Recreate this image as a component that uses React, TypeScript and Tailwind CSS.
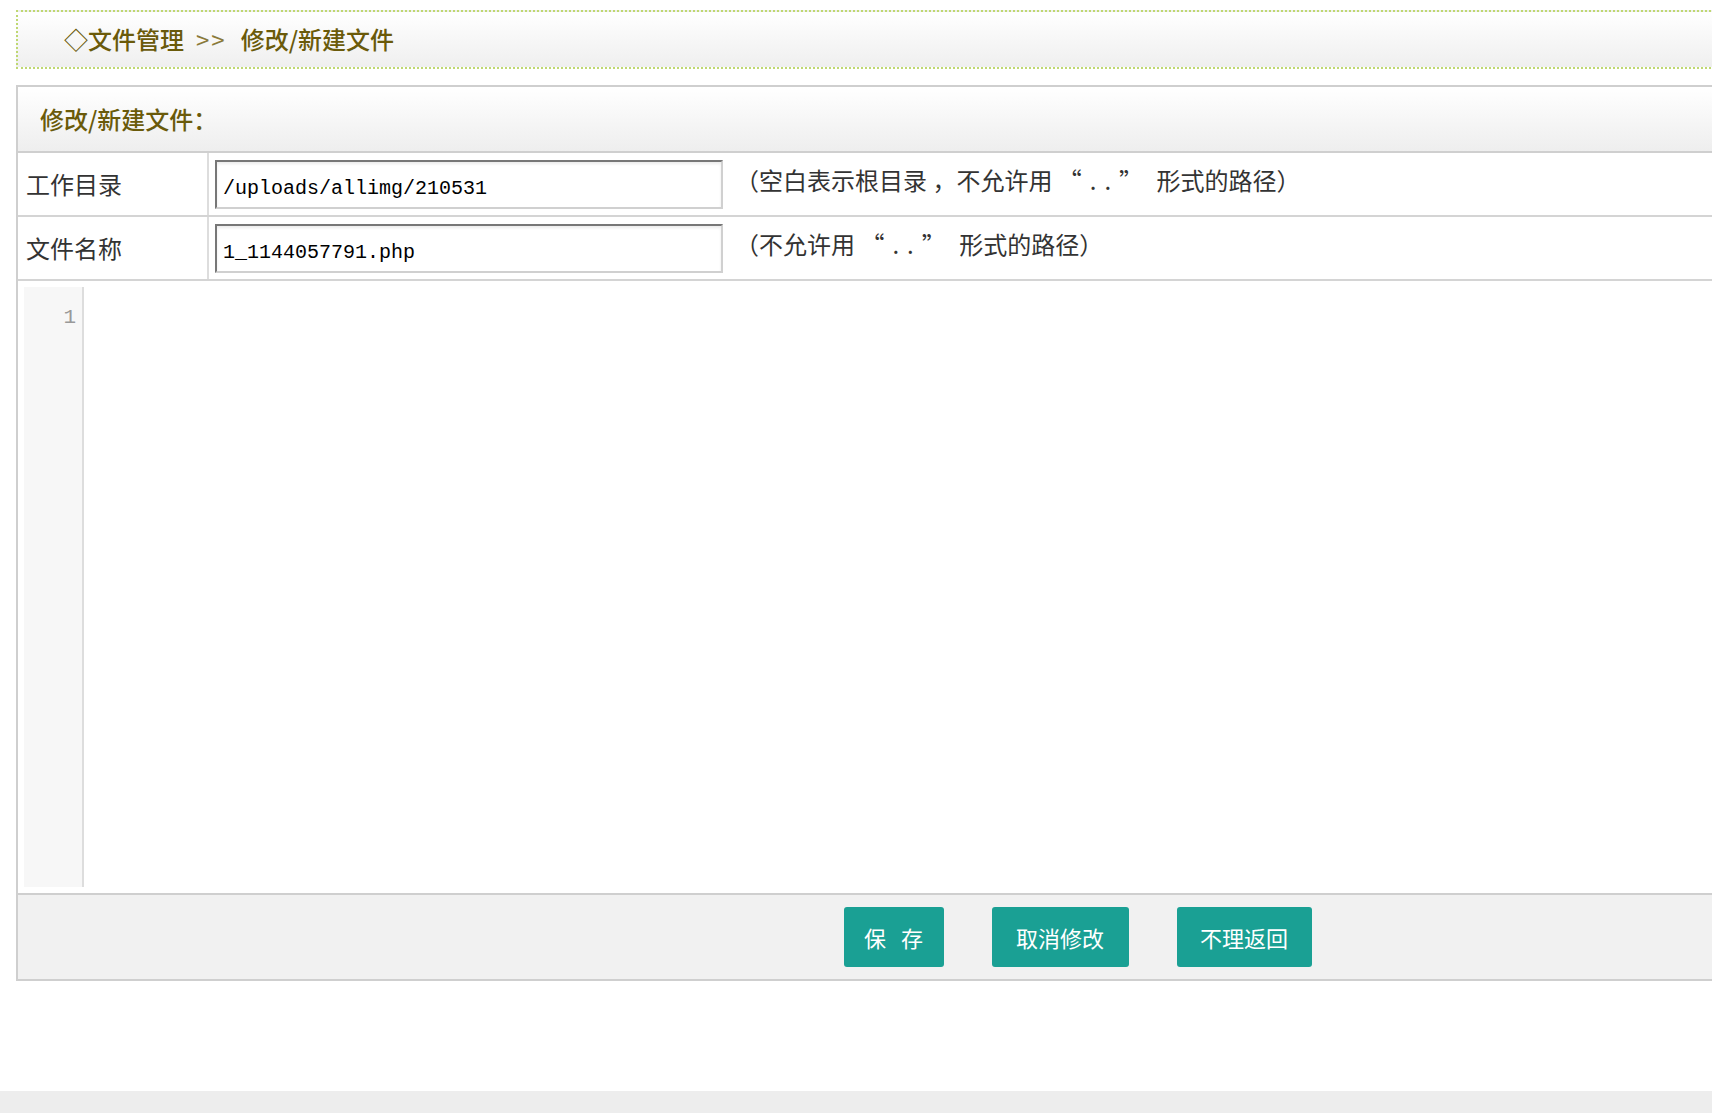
import React, { useState } from 'react';

const cjk = "font-['Noto_Sans_CJK_SC','Liberation_Sans',sans-serif]";

const FileEdit: React.FC = () => {
  const [dir, setDir] = useState('/uploads/allimg/210531');
  const [name, setName] = useState('1_1144057791.php');
  const [code, setCode] = useState('');

  return (
    <div className={`h-screen w-full overflow-hidden flex flex-col bg-white ${cjk}`}>
      <div className="flex-1 overflow-hidden">
        <div className="w-[2139px] pl-4 pt-[10px]">
          {/* breadcrumb */}
          <div className="h-[59px] border-2 border-dotted border-[#bfd872] bg-gradient-to-b from-white to-[#efefef] flex items-center pl-[46px] pb-[2px]">
            <span className="text-[24px] leading-none font-medium text-[#6a5a0a] whitespace-pre flex items-center">
              ◇文件管理
              <span className="font-normal text-[#8a7a3a] ml-[12px] mr-[14px] tracking-[2px]">&gt;&gt;</span>
              修改/新建文件
            </span>
          </div>

          <form className="mt-4 border-2 border-[#cfcfcf]" onSubmit={(e) => e.preventDefault()}>
            <div className="h-[66px] bg-gradient-to-b from-white to-[#eeeeee] border-b-2 border-[#cfcfcf] flex items-center pl-[22px]">
              <span className="text-[24px] leading-none font-medium text-[#6a5a0a]">修改/新建文件：</span>
            </div>

            <div className="h-[64px] flex border-b-2 border-[#d4d4d4]">
              <div className="w-[191px] border-r-2 border-[#dddddd] flex items-center pl-2 text-[24px] leading-none text-[#333]">
                工作目录
              </div>
              <div className="flex items-center pl-[6px]">
                <input
                  value={dir}
                  onChange={(e) => setDir(e.target.value)}
                  className="w-[508px] h-[49px] border-2 border-t-[#777] border-l-[#777] border-b-[#d0d0d0] border-r-[#d0d0d0] pl-[6px] pt-[8px] text-[20px] font-['Liberation_Mono',monospace] text-black outline-none shadow-[inset_0_2px_3px_rgba(0,0,0,0.08)]"
                />
                <span className="ml-[12px] mb-[8px] text-[24px] leading-none text-[#333] whitespace-pre">
                  （空白表示根目录 ，不允许用 <span className="tracking-[8px]">“..”</span> 形式的路径）
                </span>
              </div>
            </div>

            <div className="h-[64px] flex border-b-2 border-[#d4d4d4]">
              <div className="w-[191px] border-r-2 border-[#dddddd] flex items-center pl-2 text-[24px] leading-none text-[#333]">
                文件名称
              </div>
              <div className="flex items-center pl-[6px]">
                <input
                  value={name}
                  onChange={(e) => setName(e.target.value)}
                  className="w-[508px] h-[49px] border-2 border-t-[#777] border-l-[#777] border-b-[#d0d0d0] border-r-[#d0d0d0] pl-[6px] pt-[8px] text-[20px] font-['Liberation_Mono',monospace] text-black outline-none shadow-[inset_0_2px_3px_rgba(0,0,0,0.08)]"
                />
                <span className="ml-[12px] mb-[8px] text-[24px] leading-none text-[#333] whitespace-pre">
                  （不允许用 <span className="tracking-[8px]">“..”</span> 形式的路径）
                </span>
              </div>
            </div>

            {/* editor */}
            <div className="h-[612px] p-[6px] flex">
              <div className="w-[60px] h-full bg-[#f7f7f7] border-r-2 border-[#dddddd] pt-[16px] pr-[6px] text-right text-[21px] leading-[30px] font-['Liberation_Mono',monospace] text-[#999]">
                1
              </div>
              <textarea
                value={code}
                onChange={(e) => setCode(e.target.value)}
                className="flex-1 h-full resize-none outline-none pl-2 pt-[16px] text-[20px] leading-[30px] font-['Liberation_Mono',monospace]"
              />
            </div>

            {/* footer */}
            <div className="h-[86px] border-t-2 border-[#cfcfcf] bg-[#f1f1f1] flex items-center justify-center gap-[48px]">
              <button
                type="submit"
                className="w-[100px] h-[60px] rounded-[3px] bg-[#1aa094] text-white text-[22px] leading-none [word-spacing:10px]"
              >
                保 存
              </button>
              <button type="button" className="w-[137px] h-[60px] rounded-[3px] bg-[#1aa094] text-white text-[22px] leading-none">
                取消修改
              </button>
              <button type="button" className="w-[135px] h-[60px] rounded-[3px] bg-[#1aa094] text-white text-[22px] leading-none">
                不理返回
              </button>
            </div>
          </form>
        </div>
      </div>
      <div className="h-[22px] bg-[#ededed]" />
    </div>
  );
};

export default FileEdit;
